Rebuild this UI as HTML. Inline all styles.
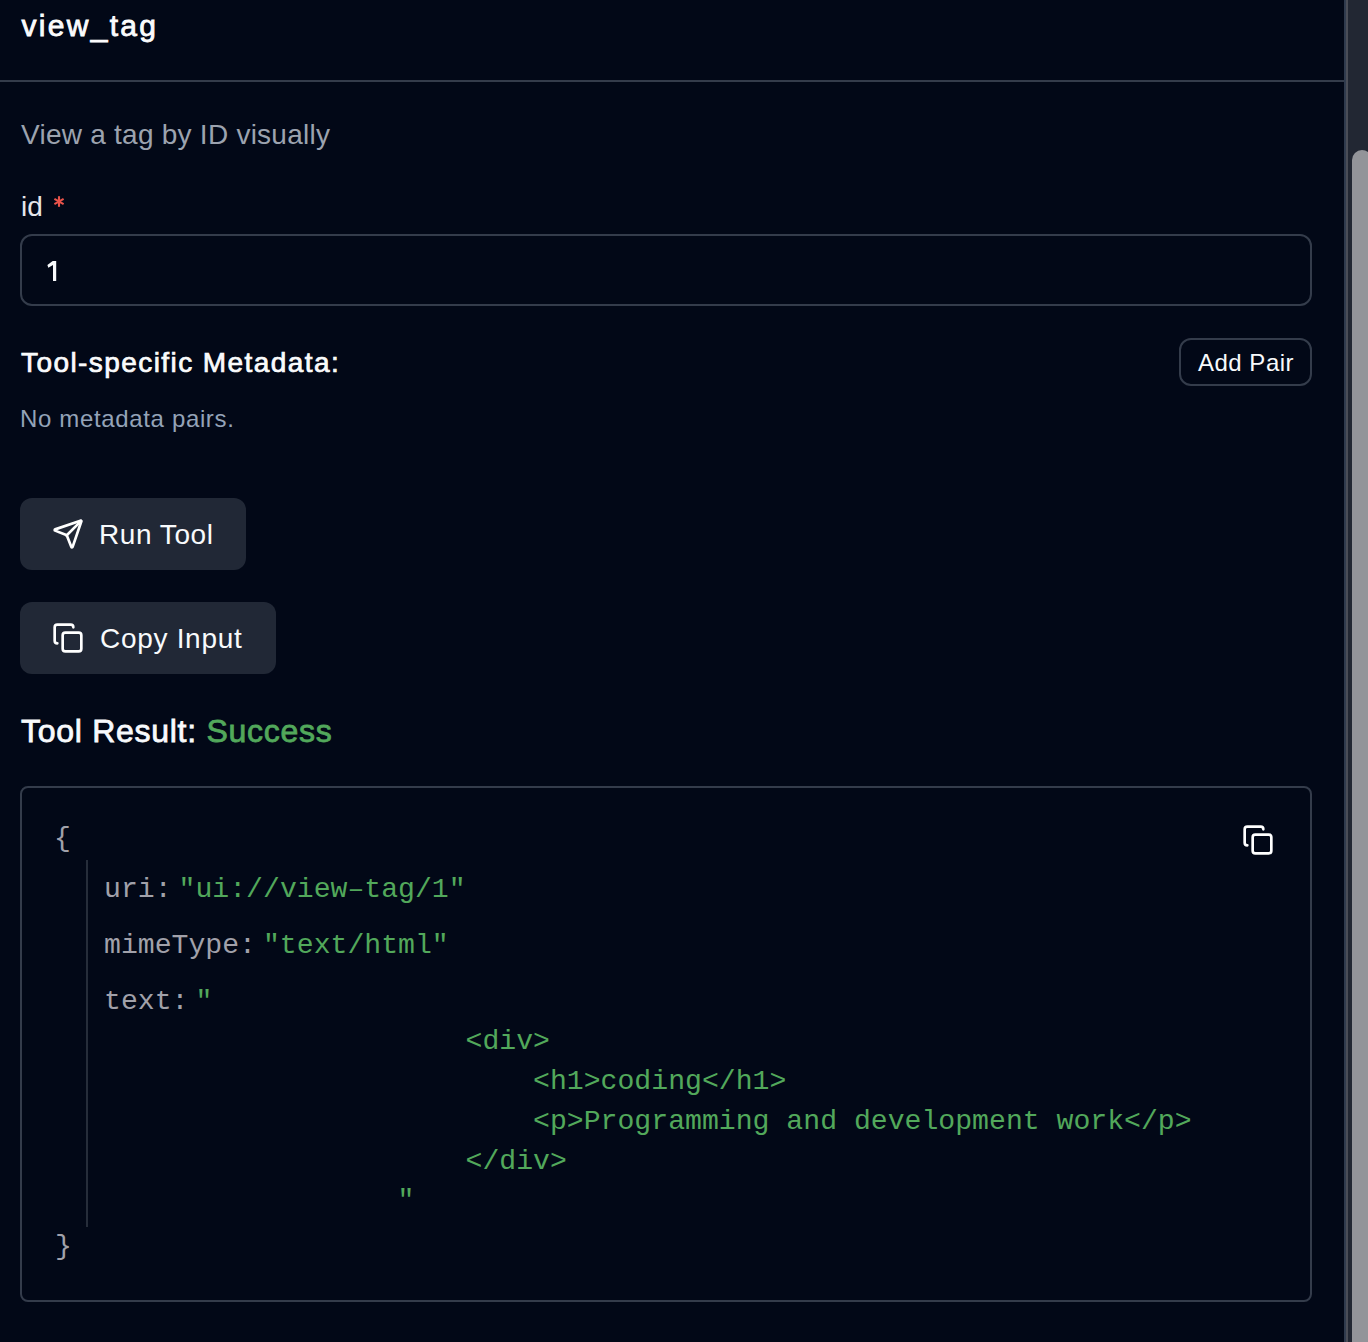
<!DOCTYPE html>
<html><head><meta charset="utf-8">
<style>
html,body{margin:0;padding:0;}
body{width:1368px;height:1342px;overflow:hidden;background:#020817;position:relative;font-family:"Liberation Sans",sans-serif;color:#f8fafc;}
.abs{position:absolute;white-space:nowrap;}
#panelborder{position:absolute;left:1344px;top:0;width:2px;height:1342px;background:#2f3a4d;}
#panelborder2{position:absolute;left:1346px;top:0;width:2px;height:1342px;background:#4a4d57;}
#track{position:absolute;left:1348px;top:0;width:20px;height:1342px;background:#222733;}
#thumb{position:absolute;left:1352px;top:150px;width:20px;height:1250px;background:#939499;border-radius:10px;}
#hdrline{position:absolute;left:0;top:80px;width:1344px;height:2px;background:#343c4b;}
.title{left:21.5px;top:6px;font-size:30px;font-weight:normal;-webkit-text-stroke:0.8px #fff;line-height:40px;letter-spacing:2.3px;}
.desc{left:21px;top:117px;font-size:28px;line-height:36px;color:#9ca3af;letter-spacing:0.25px;}
.lbl{left:21px;top:189px;font-size:28px;line-height:36px;color:#e4e6eb;}
.req{color:#ef4444;margin-left:2px;position:relative;top:1px;}
.input{position:absolute;left:20px;top:234px;width:1288px;height:68px;border:2px solid #343c4b;border-radius:12px;}
.inval{left:47px;top:254px;font-size:28px;line-height:36px;color:#f8fafc;}
.meta{left:21px;top:345px;font-size:28px;font-weight:normal;-webkit-text-stroke:0.7px #fff;line-height:36px;letter-spacing:1.43px;}
.addpair{position:absolute;left:1179px;top:338px;width:129px;height:44px;border:2px solid #343c4b;border-radius:12px;}
.addtxt{left:1198px;top:345px;font-size:24px;line-height:36px;letter-spacing:0.5px;}
.nometa{left:20px;top:403px;font-size:24px;line-height:32px;color:#94a3b8;letter-spacing:0.65px;}
.btn{position:absolute;left:20px;background:#212836;border-radius:12px;}
.btntxt{font-size:28px;line-height:36px;}
.res{left:21px;top:711px;font-size:32px;font-weight:normal;-webkit-text-stroke:0.8px currentColor;line-height:40px;letter-spacing:0.72px;}
.green{color:#52a85b;}
.code{position:absolute;left:20px;top:786px;width:1288px;height:512px;border:2px solid #343c4b;border-radius:8px;}
.mono{font-family:"Liberation Mono",monospace;font-size:28.15px;line-height:40px;white-space:pre;}
.key{color:#a1a1aa;}
.vline{position:absolute;left:86px;top:860px;width:2px;height:367px;background:#262d3a;}
</style></head><body>
<div id="track"></div>
<div id="thumb"></div>
<div id="panelborder"></div>
<div id="panelborder2"></div>
<div id="hdrline"></div>

<div class="abs title">view_tag</div>
<div class="abs desc">View a tag by ID visually</div>
<div class="abs lbl">id</div>
<svg class="abs" style="left:50px;top:190px" width="20" height="24"><g stroke="#e8534a" stroke-width="2.1" stroke-linecap="butt"><path d="M9 6.2V16.8"/><path d="M4.4 8.85L13.6 14.15"/><path d="M4.4 14.15L13.6 8.85"/></g></svg>
<div class="input"></div>
<svg class="abs" style="left:0;top:0" width="80" height="300"><path d="M52.7 261 L56.2 261 L56.2 281 L53.0 281 L53.0 265.0 L48.3 267.7 L47.4 264.9 Z" fill="#f8fafc"/></svg>

<div class="abs meta">Tool-specific Metadata:</div>
<div class="addpair"></div>
<div class="abs addtxt">Add Pair</div>
<div class="abs nometa">No metadata pairs.</div>

<div class="btn" style="top:498px;width:226px;height:72px;"></div>
<svg class="abs" style="left:52px;top:518px" width="32" height="32" viewBox="0 0 24 24" fill="none" stroke="#fff" stroke-width="2" stroke-linecap="round" stroke-linejoin="round"><path d="M14.536 21.686a.5.5 0 0 0 .937-.024l6.5-19a.496.496 0 0 0-.635-.635l-19 6.5a.5.5 0 0 0-.024.937l7.93 3.18a2 2 0 0 1 1.112 1.11z"/><path d="m21.854 2.147-10.94 10.939"/></svg>
<div class="abs btntxt" style="left:99px;top:517px;letter-spacing:0.55px;">Run Tool</div>

<div class="btn" style="top:602px;width:256px;height:72px;"></div>
<svg class="abs" style="left:52px;top:622px" width="32" height="32" viewBox="0 0 24 24" fill="none" stroke="#fff" stroke-width="2" stroke-linecap="round" stroke-linejoin="round"><rect width="14" height="14" x="8" y="8" rx="2" ry="2"/><path d="M4 16c-1.1 0-2-.9-2-2V4c0-1.1.9-2 2-2h10c1.1 0 2 .9 2 2"/></svg>
<div class="abs btntxt" style="left:100px;top:621px;letter-spacing:0.7px;">Copy Input</div>

<div class="abs res">Tool Result: <span class="green">Success</span></div>
<div class="code"></div>
<svg class="abs" style="left:1242px;top:824px" width="32" height="32" viewBox="0 0 24 24" fill="none" stroke="#fff" stroke-width="2" stroke-linecap="round" stroke-linejoin="round"><rect width="14" height="14" x="8" y="8" rx="2" ry="2"/><path d="M4 16c-1.1 0-2-.9-2-2V4c0-1.1.9-2 2-2h10c1.1 0 2 .9 2 2"/></svg>

<div class="abs mono key" style="left:54px;top:819px;">{</div>
<div class="vline"></div>
<div class="abs mono" style="left:104px;top:870px;"><span class="key">uri:</span><span style="margin-left:7px" class="green">"ui://view–tag/1"</span></div>
<div class="abs mono" style="left:104px;top:926px;"><span class="key">mimeType:</span><span style="margin-left:7px" class="green">"text/html"</span></div>
<div class="abs mono" style="left:104px;top:982px;"><span class="key">text:</span><span style="margin-left:7px" class="green">"</span></div>
<div class="abs mono green" style="left:465.5px;top:1022px;">&lt;div&gt;
    &lt;h1&gt;coding&lt;/h1&gt;
    &lt;p&gt;Programming and development work&lt;/p&gt;
&lt;/div&gt;</div>
<div class="abs mono green" style="left:397.5px;top:1181px;">"</div>
<div class="abs mono key" style="left:55px;top:1227px;">}</div>
</body></html>
